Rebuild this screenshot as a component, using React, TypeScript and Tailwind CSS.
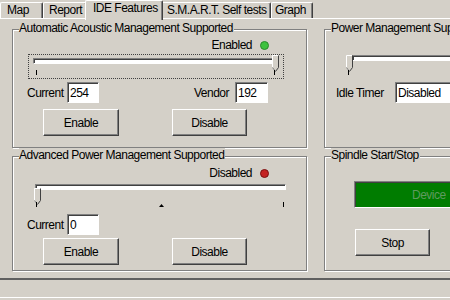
import React from "react";

const raised =
  "border border-t-white border-l-white border-r-[#404040] border-b-[#404040] shadow-[inset_-1px_-1px_0_#808080] bg-[#d4d0c8]";
const sunken =
  "border border-t-[#808080] border-l-[#808080] border-r-white border-b-white shadow-[inset_1px_1px_0_#404040] bg-white";

const Thumb: React.FC = () => (
  <svg width="7" height="17" viewBox="0 0 7 17">
    <path d="M0.5 0.5H6.5V12.5L3.5 16.5L0.5 12.5Z" fill="#d4d0c8" />
    <path d="M0.5 12.5V0.5H6" stroke="#ffffff" fill="none" />
    <path d="M6.5 0.5V12.5L3.5 16.5" stroke="#404040" fill="none" />
    <path d="M0.5 12.5L3.5 16.5" stroke="#808080" fill="none" />
  </svg>
);

const Track: React.FC<{ className: string }> = ({ className }) => (
  <div
    className={`h-[6px] border border-t-[#808080] border-l-[#808080] border-r-white border-b-white shadow-[inset_1px_1px_0_#404040] bg-white ${className}`}
  />
);

const Tick: React.FC<{ className: string }> = ({ className }) => (
  <div className={`absolute w-px h-[5px] bg-black ${className}`} />
);

const Dot: React.FC<{ on: boolean }> = ({ on }) => (
  <span
    className={`ml-[8px] block w-[9px] h-[9px] rounded-full border ${
      on ? "bg-[#3ec23e] border-[#2b8a2b]" : "bg-[#c42222] border-[#7a1010]"
    }`}
  />
);

const Edit: React.FC<{ value: string; className: string }> = ({ value, className }) => (
  <div className={`${sunken} h-[21px] pl-[2px] flex items-center leading-[14px] ${className}`}>
    {value}
  </div>
);

const Button: React.FC<{ label: string; className: string }> = ({ label, className }) => (
  <div className={`${raised} h-[27px] flex items-center justify-center ${className}`}>{label}</div>
);

const Group: React.FC<{ title: string; className: string; children: React.ReactNode }> = ({
  title,
  className,
  children,
}) => (
  <div
    className={`relative border border-[#808080] shadow-[inset_1px_1px_0_#fff,1px_1px_0_#fff] ${className}`}
  >
    <span className="absolute -top-[9px] left-[6px] bg-[#d4d0c8] pr-[1px] leading-[14px] whitespace-nowrap">
      {title}
    </span>
    {children}
  </div>
);

const Tab: React.FC<{ label: string; className: string; active?: boolean }> = ({
  label,
  className,
  active,
}) =>
  active ? (
    <div
      className={`relative z-10 self-start h-[20px] -mx-[2px] bg-[#d4d0c8] border-t border-l border-t-white border-l-white border-r border-r-[#404040] shadow-[inset_-1px_0_0_#808080] rounded-t-[2px] leading-[14px] whitespace-nowrap ${className}`}
    >
      {label}
    </div>
  ) : (
    <div
      className={`h-[16px] border-t border-l border-t-white border-l-white border-r border-r-[#404040] shadow-[inset_-1px_0_0_#808080] rounded-t-[2px] leading-[14px] whitespace-nowrap ${className}`}
    >
      {label}
    </div>
  );

const App: React.FC = () => {
  return (
    <div className="w-[450px] h-[300px] overflow-hidden bg-[#d4d0c8] text-black text-[12px] tracking-[-0.5px] font-['Liberation_Sans',Arial,sans-serif]">
      <div className="relative z-10 flex h-[18px] items-end">
        <Tab label="Map" className="w-[43px] pl-[6px]" />
        <Tab label="Report" className="w-[44px] pl-[5px]" />
        <Tab label="IDE Features" className="w-[78px] pl-[7px]" active />
        <Tab label="S.M.A.R.T. Self tests" className="w-[110px] pl-[5px]" />
        <Tab label="Graph" className="w-[42px] pl-[3px]" />
      </div>

      <div className="w-[600px] border-t border-white border-b-2 border-b-[#606060] pl-[12px] pb-[7px] flex gap-[17px]">
        <div className="w-[295px] shrink-0 flex flex-col">
          <Group title="Automatic Acoustic Management Supported" className="mt-[10px] h-[119px]">
            <div className="mt-[9px] flex h-[12px] items-center justify-end pr-[37px]">
              <span className="leading-[12px]">Enabled</span>
              <Dot on />
            </div>
            <div className="relative mt-[3px] ml-[15px] h-[25px] w-[256px] border border-dotted border-[#404040]">
              <Track className="mt-[3px] ml-[4px] w-[246px]" />
              <div className="absolute left-[243px] top-0">
                <Thumb />
              </div>
              <Tick className="left-[7px] top-[15px]" />
              <Tick className="left-[245px] top-[15px]" />
            </div>
            <div className="mt-[3px] ml-[14px] flex items-center">
              <span className="w-[40px]">Current</span>
              <Edit value="254" className="w-[32px]" />
              <span className="ml-[95px] w-[41px]">Vendor</span>
              <Edit value="192" className="w-[33px]" />
            </div>
            <div className="mt-[6px] ml-[30px] flex">
              <Button label="Enable" className="w-[76px]" />
              <Button label="Disable" className="ml-[53px] w-[75px]" />
            </div>
          </Group>

          <Group title="Advanced Power Management Supported" className="mt-[8px] h-[115px]">
            <div className="mt-[10px] flex h-[12px] items-center justify-end pr-[37px]">
              <span className="leading-[12px]">Disabled</span>
              <Dot on={false} />
            </div>
            <div className="relative mt-[1px] ml-[15px] h-[26px] w-[262px]">
              <Track className="mt-[5px] ml-[7px] w-[251px]" />
              <div className="absolute left-[6px] top-[4px]">
                <Thumb />
              </div>
              <Tick className="left-[8px] top-[18px]" />
              <Tick className="left-[255px] top-[18px]" />
              <svg className="absolute left-[131px] top-[20px]" width="5" height="3" viewBox="0 0 5 3">
                <path d="M2.5 0L5 3H0Z" fill="#000" />
              </svg>
            </div>
            <div className="mt-[4px] ml-[14px] flex items-center">
              <span className="w-[40px]">Current</span>
              <Edit value="0" className="w-[32px]" />
            </div>
            <div className="mt-[3px] ml-[30px] flex">
              <Button label="Enable" className="w-[76px]" />
              <Button label="Disable" className="ml-[53px] w-[75px]" />
            </div>
          </Group>
        </div>

        <div className="w-[220px] shrink-0 flex flex-col">
          <Group title="Power Management Supported" className="mt-[10px] h-[119px]">
            <div className="relative mt-[25px] ml-[21px] h-[20px] w-[220px]">
              <Track className="mt-[3px] ml-[6px] w-[210px]" />
              <div className="absolute left-0 top-0">
                <Thumb />
              </div>
              <Tick className="left-[2px] top-[15px]" />
            </div>
            <div className="mt-[7px] ml-[11px] flex items-center">
              <span className="w-[59px]">Idle Timer</span>
              <Edit value="Disabled" className="w-[130px]" />
            </div>
          </Group>

          <Group title="Spindle Start/Stop" className="mt-[8px] h-[115px]">
            <div className="mt-[24px] ml-[29px] h-[27px] w-[180px] border border-t-[#808080] border-l-[#808080] border-r-white border-b-white shadow-[inset_1px_1px_0_#404040] bg-[#007c00] pl-[57px] flex items-center text-[#5f9a5f]">
              Device
            </div>
            <div className="mt-[21px] ml-[30px] flex">
              <Button label="Stop" className="w-[75px]" />
            </div>
          </Group>
        </div>
      </div>

      <div className="mt-[17px] h-px bg-white" />
    </div>
  );
};

export default App;
